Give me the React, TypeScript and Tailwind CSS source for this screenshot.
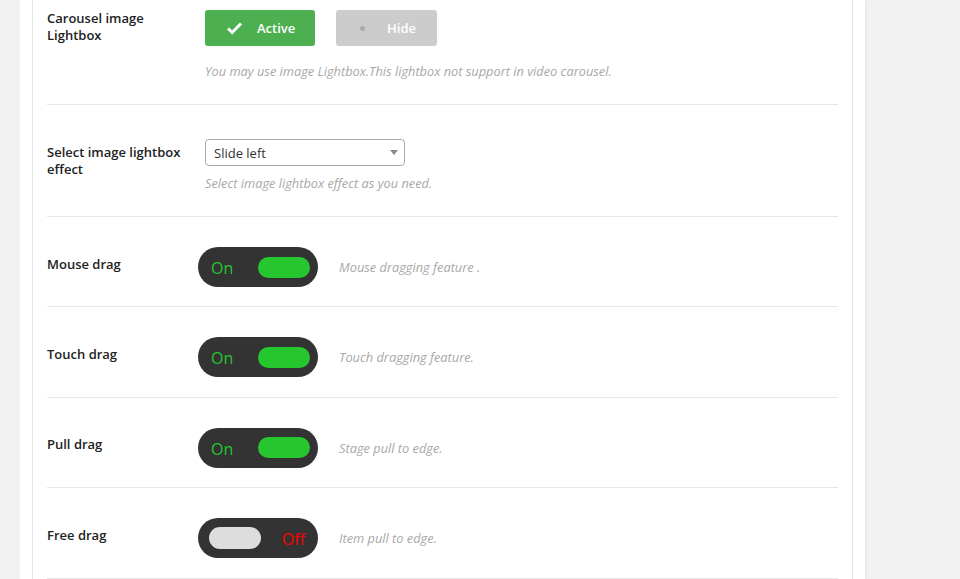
import React from "react";

const font = { fontFamily: '"Open Sans", "Noto Sans", sans-serif' };

function Label({ children, lh = "leading-[17px]" }: { children: React.ReactNode; lh?: string }) {
  return (
    <div className={`w-[158px] shrink-0 pr-4 text-[13px] font-semibold text-[#222] ${lh}`}>
      {children}
    </div>
  );
}

function Desc({ children }: { children: React.ReactNode }) {
  return <div className="text-[12.8px] italic leading-4 text-[#a8a8a8]">{children}</div>;
}

function Toggle({ on }: { on: boolean }) {
  return (
    <div className="ml-[-7px] flex h-10 w-[120px] shrink-0 items-center rounded-full bg-[#333] px-3">
      {on ? (
        <>
          <span className="ml-[1px] mt-[2px] text-[16px] leading-none text-[#26c62f]">On</span>
          <span className="ml-auto mr-[-4px] h-[21px] w-[52px] rounded-full bg-[#26c62f]" />
        </>
      ) : (
        <>
          <span className="ml-[-1px] h-[22px] w-[52px] rounded-full bg-[#dddddd]" />
          <span className="ml-auto mr-[1px] mt-[2px] text-[16px] leading-none text-[#ff0000]">Off</span>
        </>
      )}
    </div>
  );
}

function ToggleRow({ label, desc, on }: { label: string; desc: string; on: boolean }) {
  return (
    <div className="flex items-center border-b border-[#e6e6e6] pb-[19.4px] pt-[30px]">
      <div className="pb-[6px]">
        <Label>{label}</Label>
      </div>
      <Toggle on={on} />
      <div className="ml-[21px]">
        <Desc>{desc}</Desc>
      </div>
    </div>
  );
}

export default function App() {
  return (
    <div className="flex h-[579px] w-[960px] overflow-hidden bg-[#f1f1f1]" style={font}>
      <div className="w-5 shrink-0" />
      <div className="w-[845px] shrink-0 bg-white pl-3 pr-3 shadow-[1px_0_2px_rgba(0,0,0,0.06)]">
        <div className="h-full border-x border-[#e4e4e4] px-[14px]">
          {/* Row 1 */}
          <div className="flex border-b border-[#e6e6e6] pb-[25px] pt-[10px]">
            <div>
              <Label>
                Carousel image
                <br />
                Lightbox
              </Label>
            </div>
            <div className="flex flex-col">
              <div className="flex gap-[21px]">
                <div className="flex h-9 w-[110px] items-center rounded-[3px] bg-[#4caf50] pl-[21px] text-white">
                  <svg width="17" height="14" viewBox="0 0 17 14" className="shrink-0">
                    <path d="M2 7.5 L6.2 11.5 L15 2.5" fill="none" stroke="white" strokeWidth="3" />
                  </svg>
                  <span className="ml-[14px] mt-[1px] text-[13px] font-semibold">Active</span>
                </div>
                <div className="flex h-9 w-[101px] items-center rounded-[3px] bg-[#cccccc] pl-[24px] text-white">
                  <span className="h-[5px] w-[5px] rounded-full bg-[#aaaaaa]" />
                  <span className="ml-[22px] mt-[1px] text-[13px] font-semibold">Hide</span>
                </div>
              </div>
              <div className="mt-[17px]">
                <Desc>You may use image Lightbox.This lightbox not support in video carousel.</Desc>
              </div>
            </div>
          </div>

          {/* Row 2 */}
          <div className="flex border-b border-[#e6e6e6] pb-[25px] pt-[34px]">
            <div className="pt-[5px]">
              <Label>
                Select image lightbox
                <br />
                effect
              </Label>
            </div>
            <div className="flex flex-col">
              <div className="flex h-[27px] w-[200px] items-center rounded-[4px] border border-[#aaaaaa] pl-[8px] pr-[6px]">
                <span className="mt-[2px] text-[13px] text-[#333]">Slide left</span>
                <svg width="8" height="5" viewBox="0 0 8 5" className="ml-auto">
                  <path d="M0 0 L8 0 L4 5 Z" fill="#888" />
                </svg>
              </div>
              <div className="mt-[9px]">
                <Desc>Select image lightbox effect as you need.</Desc>
              </div>
            </div>
          </div>

          <ToggleRow label="Mouse drag" desc="Mouse dragging feature ." on />
          <ToggleRow label="Touch drag" desc="Touch dragging feature." on />
          <ToggleRow label="Pull drag" desc="Stage pull to edge." on />
          <ToggleRow label="Free drag" desc="Item pull to edge." on={false} />
        </div>
      </div>
    </div>
  );
}
